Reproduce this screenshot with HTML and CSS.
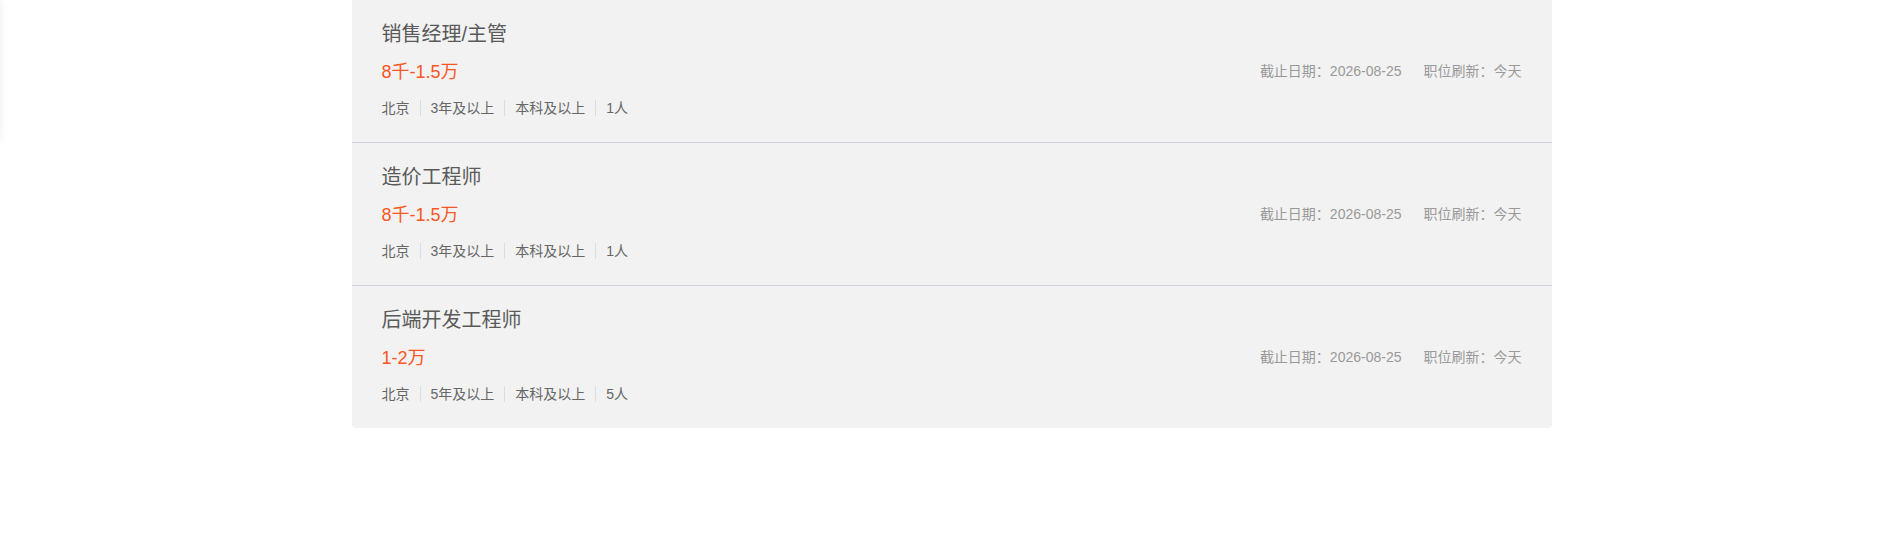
FILE: index.html
```html
<!DOCTYPE html>
<html lang="zh-CN">
<head>
  <meta charset="UTF-8">
  <title>职位列表</title>
  <link rel="stylesheet" href="styles.css">
</head>
<body>

  <!-- 侧边浮层（只露出阴影） -->
  <div class="side-float"></div>

  <div class="job-list">
    <div class="job-item">
      <h3 class="job-name">销售经理/主管</h3>
      <div class="job-row">
        <span class="job-salary">8千-1.5万</span>
        <div class="job-meta">
          <span>截止日期：2026-08-25</span>
          <span>职位刷新：今天</span>
        </div>
      </div>
      <div class="job-tags">
        <span>北京</span><span>3年及以上</span><span>本科及以上</span><span>1人</span>
      </div>
    </div>

    <div class="job-item">
      <h3 class="job-name">造价工程师</h3>
      <div class="job-row">
        <span class="job-salary">8千-1.5万</span>
        <div class="job-meta">
          <span>截止日期：2026-08-25</span>
          <span>职位刷新：今天</span>
        </div>
      </div>
      <div class="job-tags">
        <span>北京</span><span>3年及以上</span><span>本科及以上</span><span>1人</span>
      </div>
    </div>

    <div class="job-item">
      <h3 class="job-name">后端开发工程师</h3>
      <div class="job-row">
        <span class="job-salary">1-2万</span>
        <div class="job-meta">
          <span>截止日期：2026-08-25</span>
          <span>职位刷新：今天</span>
        </div>
      </div>
      <div class="job-tags">
        <span>北京</span><span>5年及以上</span><span>本科及以上</span><span>5人</span>
      </div>
    </div>
  </div>

</body>
</html>
```

FILE: styles.css
```css
* {
  box-sizing: border-box;
}

body {
  margin: 0;
  padding: 0;
  background: #fff;
  font-family: 'Liberation Sans', 'Noto Sans CJK SC', sans-serif;
  color: #555;
}

.side-float {
  position: fixed;
  top: 0;
  left: -300px;
  width: 300px;
  height: 140px;
  background: #fff;
  box-shadow: 0 0 8px rgba(0, 0, 0, 0.08);
}

.job-list {
  width: 1200px;
  margin: 0 auto;
  background: #f2f2f2;
  border-radius: 0 0 4px 4px;
}

.job-item {
  height: 143px;
  padding: 20px 30px 0;
  border-bottom: 1px solid #cdd2dc;
}

.job-item:last-child {
  height: 142px;
  border-bottom: none;
}

.job-name {
  margin: 0;
  font-size: 20px;
  font-weight: normal;
  line-height: 28px;
  color: #5a5a5a;
}

.job-row {
  display: flex;
  justify-content: space-between;
  align-items: center;
  margin-top: 12px;
  height: 24px;
}

.job-salary {
  font-size: 18px;
  line-height: 24px;
  color: #fc5624;
}

.job-meta {
  display: flex;
  gap: 22px;
  margin-bottom: 2px;
  font-size: 14px;
  line-height: 20px;
  color: #999;
}

.job-tags {
  display: flex;
  margin-top: 14px;
  font-size: 14px;
  line-height: 20px;
  color: #666;
}

.job-tags span {
  padding: 0 10px;
  border-left: 1px solid #ddd;
  line-height: 16px;
  margin: 2px 0;
}

.job-tags span:first-child {
  padding-left: 0;
  border-left: none;
}
```
